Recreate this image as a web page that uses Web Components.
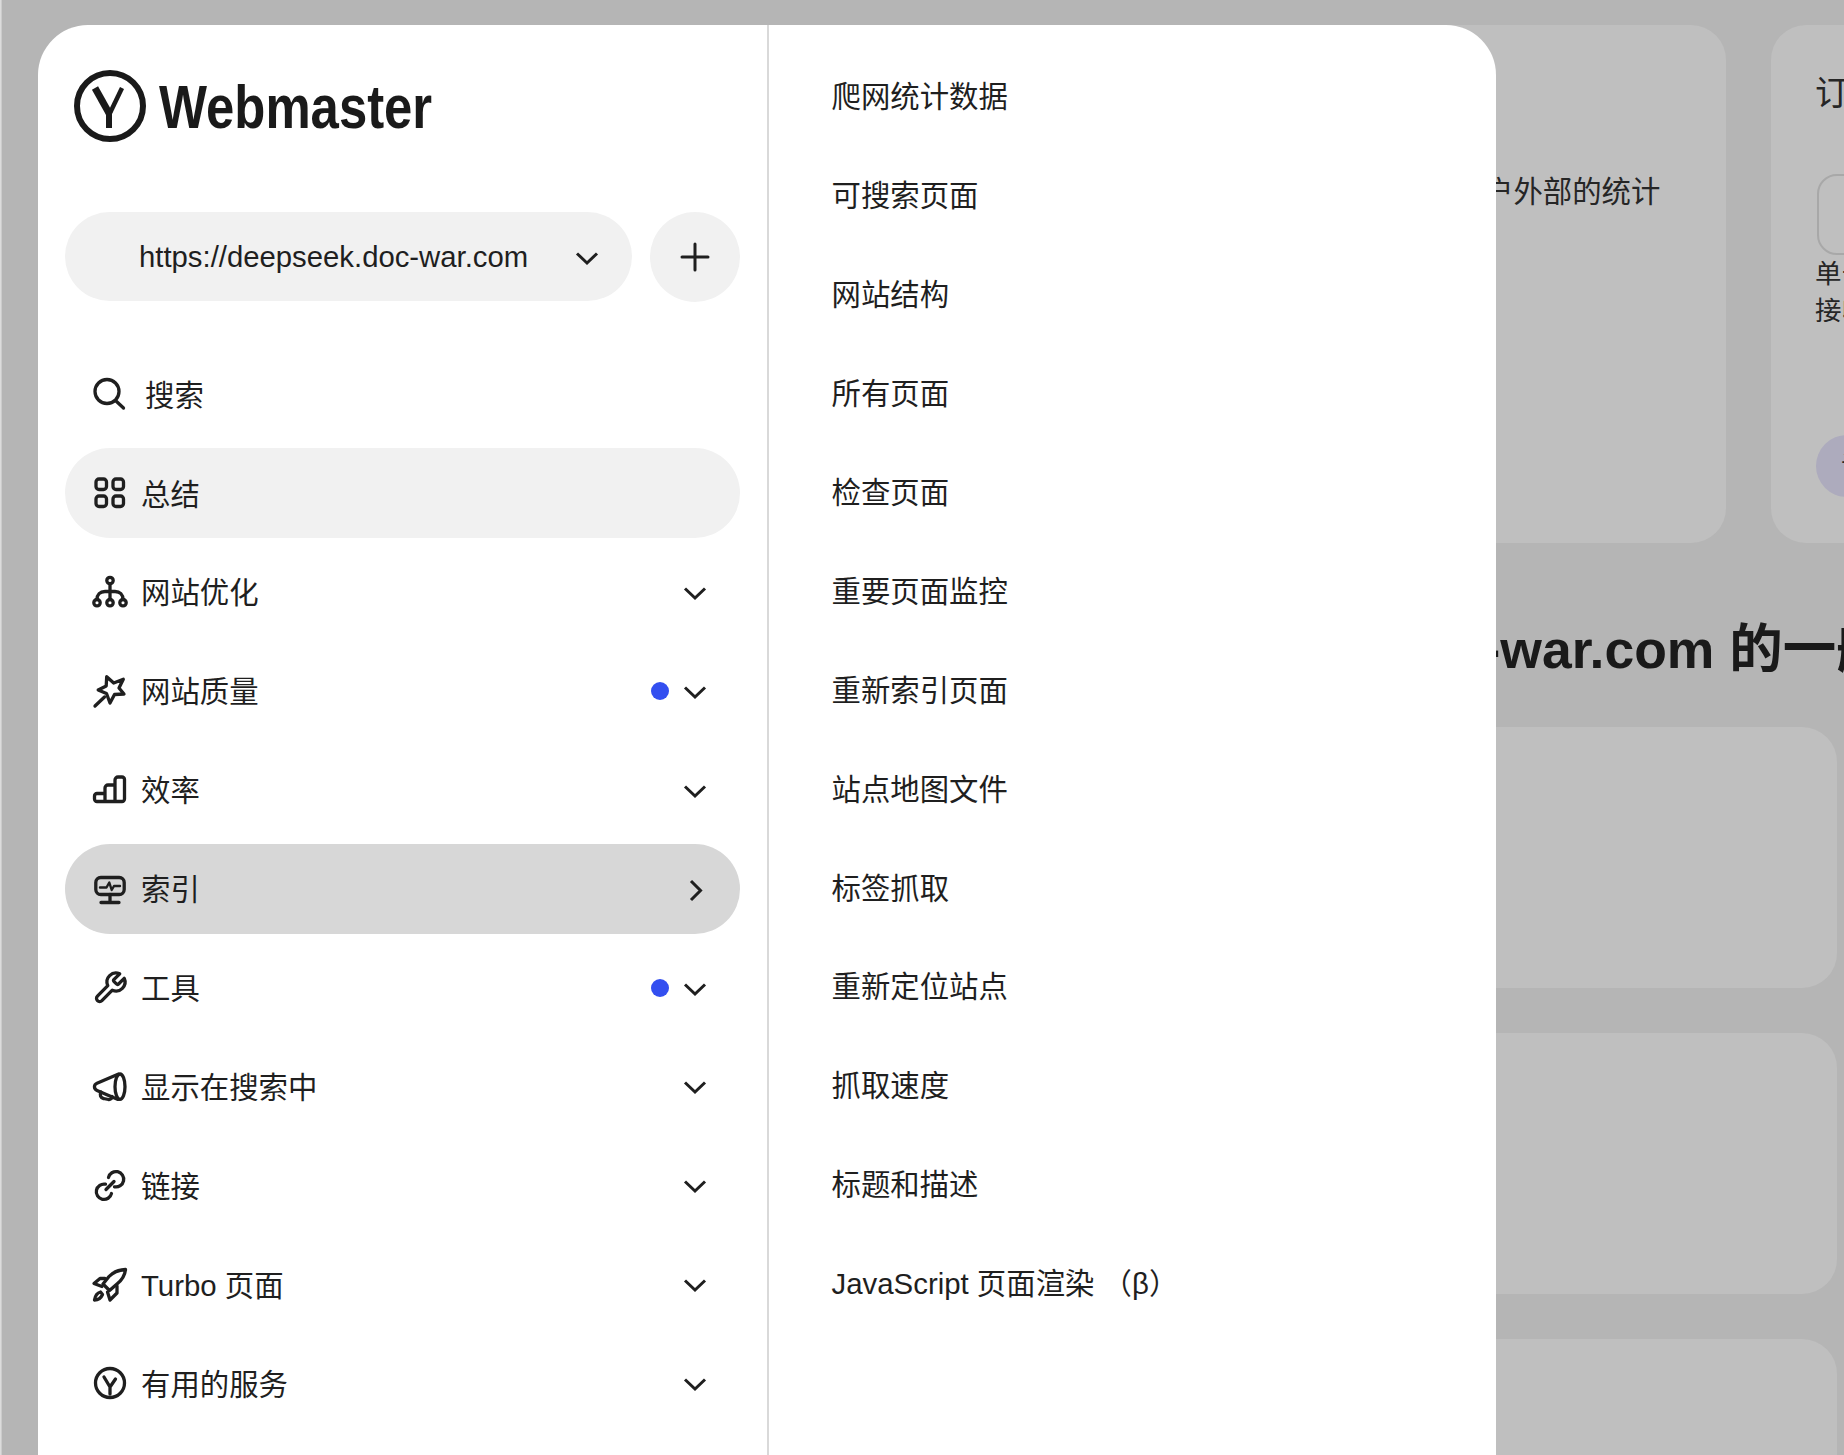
<!DOCTYPE html>
<html lang="zh">
<head>
<meta charset="utf-8">
<title>Webmaster</title>
<style>
  html, body { margin: 0; padding: 0; height: 100%; overflow: hidden; }
  body { font-family: "Liberation Sans", "Noto Sans CJK SC", sans-serif; color: #1f1f1f; }
</style>
</head>
<body>
<wm-page>
  <wm-bg-top slot="top"></wm-bg-top>
  <wm-drawer slot="drawer">
    <wm-logo slot="logo"></wm-logo>
    <wm-site-select slot="site">https://deepseek.doc-war.com</wm-site-select>
    <wm-nav-item slot="nav" icon="search" gap="17">搜索</wm-nav-item>
    <wm-nav-item slot="nav" icon="grid" state="current">总结</wm-nav-item>
    <wm-nav-item slot="nav" icon="tree" arrow="down">网站优化</wm-nav-item>
    <wm-nav-item slot="nav" icon="star" arrow="down" dot>网站质量</wm-nav-item>
    <wm-nav-item slot="nav" icon="bars" arrow="down">效率</wm-nav-item>
    <wm-nav-item slot="nav" icon="monitor" arrow="right" state="open">索引</wm-nav-item>
    <wm-nav-item slot="nav" icon="wrench" arrow="down" dot>工具</wm-nav-item>
    <wm-nav-item slot="nav" icon="megaphone" arrow="down">显示在搜索中</wm-nav-item>
    <wm-nav-item slot="nav" icon="link" arrow="down">链接</wm-nav-item>
    <wm-nav-item slot="nav" icon="rocket" arrow="down">Turbo 页面</wm-nav-item>
    <wm-nav-item slot="nav" icon="ya" arrow="down">有用的服务</wm-nav-item>
    <wm-sub-item slot="sub">爬网统计数据</wm-sub-item>
    <wm-sub-item slot="sub">可搜索页面</wm-sub-item>
    <wm-sub-item slot="sub">网站结构</wm-sub-item>
    <wm-sub-item slot="sub">所有页面</wm-sub-item>
    <wm-sub-item slot="sub">检查页面</wm-sub-item>
    <wm-sub-item slot="sub">重要页面监控</wm-sub-item>
    <wm-sub-item slot="sub">重新索引页面</wm-sub-item>
    <wm-sub-item slot="sub">站点地图文件</wm-sub-item>
    <wm-sub-item slot="sub">标签抓取</wm-sub-item>
    <wm-sub-item slot="sub">重新定位站点</wm-sub-item>
    <wm-sub-item slot="sub">抓取速度</wm-sub-item>
    <wm-sub-item slot="sub">标题和描述</wm-sub-item>
    <wm-sub-item slot="sub">JavaScript 页面渲染 （β）</wm-sub-item>
  </wm-drawer>
</wm-page>

<script>
const ICONS = {
  search: '<circle cx="15" cy="15.5" r="12"/><path d="M23.5 24.5l8 7.5"/>',
  grid: '<rect x="4" y="4" width="10.500" height="10.500" rx="3"/><rect x="21" y="4" width="10.500" height="10.500" rx="3"/><rect x="4" y="21" width="10.500" height="10.500" rx="3"/><rect x="21" y="21" width="10.500" height="10.500" rx="3"/>',
  tree: '<circle cx="18" cy="6.5" r="3.2"/><circle cx="5" cy="28.7" r="3.2"/><circle cx="18" cy="28.7" r="3.2"/><circle cx="31" cy="28.7" r="3.2"/><path d="M18 10v15.5M5 25.5c0-5 3-8 8-8h10c5 0 8 3 8 8"/>',
  star: '<path d="M14.7 3.700l7 6.300 9.600-3.700-4.300 8.700 5 6-9.500.5-4.500 8.500-3.500-9.500-8.300-3.500 8-4z"/><path d="M3 33l9.500-9"/>',
  bars: '<path d="M13 29.5H5A2.5 2.5 0 0 1 2.5 27v-3A2.5 2.5 0 0 1 5 21.5h8M13 29.5V16a3 3 0 0 1 3-3h7M23 29.5V8a3 3 0 0 1 3-3h4a2.5 2.5 0 0 1 2.5 2.5V27a2.5 2.5 0 0 1-2.5 2.5H5"/>',
  monitor: '<rect x="3.8" y="6.5" width="28.4" height="17" rx="5"/><path d="M18 23.5v8M9 31.5h18"/><path d="M8 16.5h6.5l2.8-5 2.4 7.5 2.3-4h6" stroke-width="2.4"/>',
  wrench: '<g transform="scale(1.5)"><path stroke-width="2.2" d="M14.7 6.3a1 1 0 0 0 0 1.4l1.6 1.6a1 1 0 0 0 1.4 0l3.77-3.77a6 6 0 0 1-7.94 7.94l-6.91 6.91a2.12 2.12 0 0 1-3-3l6.91-6.91a6 6 0 0 1 7.94-7.94l-3.76 3.76z"/></g>',
  megaphone: '<ellipse cx="28" cy="18.7" rx="5" ry="12.7"/><path d="M26 6.3L5 15.2c-3.4 1.5-3.4 5.7 0 7.2l21 9"/><path d="M9 24c-1.5 3-.5 6 2.5 6.5l5 1c2 .3 3.500-1 3.500-3"/>',
  link: '<path d="M13.500 17.200A7.700 7.700 0 1 0 19.500 26.500M22.500 19.800A7.700 7.700 0 1 0 16.500 10.500M14 22.500l8-8"/>',
  rocket: '<path d="M33.500 3.500C26 4 21 6 17 10.500L11 18l6.500 6.500L25 18c5-4 8-9 8.500-14.500z"/><path d="M13 12.500H8l-6 5 8 3M25 20v7l-7 7-2.500-8"/><path d="M8.500 26C4.500 27 3 31 2.500 34c3.500 0 6.500-2 8-5.500z"/>',
  ya: '<circle cx="18" cy="18" r="14.500"/><path d="M12 12l6 10v7M23.500 14L18 22"/>'
};

class WmIcon extends HTMLElement {
  constructor() {
    super();
    this.attachShadow({ mode: 'open' });
  }
  connectedCallback() {
    const name = this.getAttribute('name');
    this.shadowRoot.innerHTML = `
      <style>
        :host { display: block; width: 36px; height: 36px; flex: none; }
        svg { display: block; width: 36px; height: 36px; fill: none; stroke: #1f1f1f; stroke-width: 3.3;
              stroke-linecap: round; stroke-linejoin: round; overflow: visible; }
      </style>
      <svg viewBox="0 0 36 36">${ICONS[name]}</svg>`;
  }
}
customElements.define('wm-icon', WmIcon);

class WmNavItem extends HTMLElement {
  constructor() {
    super();
    this.attachShadow({ mode: 'open' });
  }
  connectedCallback() {
    const arrow = this.getAttribute('arrow');
    const state = this.getAttribute('state');
    const gap = this.getAttribute('gap') || 13;
    const bg = state === 'current' ? '#f1f1f1' : state === 'open' ? '#d7d7d7' : 'transparent';
    let arrowSvg = '';
    if (arrow === 'down') arrowSvg = '<svg class="arrow" viewBox="0 0 24 24"><path d="M2 7.500l10 9.500 10-9.500"/></svg>';
    if (arrow === 'right') arrowSvg = '<svg class="arrow" viewBox="0 0 24 24"><path d="M8 3l9.500 9.500L8 22"/></svg>';
    this.shadowRoot.innerHTML = `
      <style>
        :host { display: flex; align-items: center; height: 90px; padding: 0 33px 0 27px;
                border-radius: 45px; background: ${bg}; font-size: 29.4px; }
        .label { flex: 1; margin: 0 0 3px ${gap}px; white-space: nowrap; }
        .dot { width: 18px; height: 18px; border-radius: 50%; background: #334ff0; margin-right: 14px; }
        .arrow { width: 24px; height: 24px; fill: none; stroke: #1f1f1f; stroke-width: 3; flex: none;
                 margin-top: 2px; }
      </style>
      <wm-icon name="${this.getAttribute('icon')}"></wm-icon>
      <span class="label"><slot></slot></span>
      ${this.hasAttribute('dot') ? '<span class="dot"></span>' : ''}
      ${arrowSvg}`;
  }
}
customElements.define('wm-nav-item', WmNavItem);

class WmSubItem extends HTMLElement {
  constructor() {
    super();
    this.attachShadow({ mode: 'open' }).innerHTML = `
      <style>
        :host { display: flex; align-items: center; height: 89.9px; font-size: 29.4px; white-space: pre; }
      </style>
      <slot></slot>`;
  }
}
customElements.define('wm-sub-item', WmSubItem);

class WmLogo extends HTMLElement {
  constructor() {
    super();
    this.attachShadow({ mode: 'open' }).innerHTML = `
      <style>
        :host { display: flex; align-items: center; height: 72px; margin-left: 9px; }
        svg { width: 72px; height: 72px; flex: none; }
        .name { display: block; width: 273px; margin: 2px 0 0 13px; font-size: 62px; font-weight: 700; line-height: 72px;
                color: #1a1a1a; transform: scaleX(.82); transform-origin: left center; white-space: nowrap; }
      </style>
      <svg viewBox="0 0 72 72" fill="none" stroke="#1a1a1a">
        <circle cx="36" cy="36" r="33" stroke-width="6"/>
        <path d="M21 18l14.500 26" stroke-width="7"/>
        <path d="M48 18L35.500 44" stroke-width="4.500"/>
        <path d="M35 42v16" stroke-width="6"/>
      </svg>
      <span class="name">Webmaster</span>`;
  }
}
customElements.define('wm-logo', WmLogo);

class WmSiteSelect extends HTMLElement {
  constructor() {
    super();
    this.attachShadow({ mode: 'open' }).innerHTML = `
      <style>
        :host { display: flex; gap: 18px; }
        .select { display: flex; align-items: center; justify-content: space-between; box-sizing: border-box;
                  width: 567px; height: 89px; padding: 0 33px 0 74px; border-radius: 45px; background: #f1f1f1; }
        .url { font-size: 29.3px; white-space: nowrap; }
        .plus { display: flex; align-items: center; justify-content: center; width: 90px; height: 90px;
                border-radius: 50%; background: #f1f1f1; }
        svg { fill: none; stroke: #1f1f1f; stroke-width: 3; }
      </style>
      <div class="select">
        <span class="url"><slot></slot></span>
        <svg width="24" height="24" viewBox="0 0 24 24" style="margin-top:3px"><path d="M2 7.500l10 9.500 10-9.500"/></svg>
      </div>
      <div class="plus">
        <svg width="30" height="30" viewBox="0 0 30 30" stroke-linecap="round"><path d="M15 2v26M2 15h26"/></svg>
      </div>`;
  }
}
customElements.define('wm-site-select', WmSiteSelect);

class WmDrawer extends HTMLElement {
  constructor() {
    super();
    this.attachShadow({ mode: 'open' }).innerHTML = `
      <style>
        :host { position: absolute; left: 38px; top: 25px; bottom: 0; width: 1458px; display: flex;
                background: #fff; border-radius: 50px 50px 0 0; overflow: hidden; }
        .main { box-sizing: border-box; width: 731px; padding: 45px 27px 0; border-right: 2px solid #d9d9d9;
                flex: none; }
        .site { margin-top: 70px; }
        .nav { display: flex; flex-direction: column; gap: 8.9px; margin-top: 47.2px; }
        .sub { display: flex; flex-direction: column; gap: 9px; padding: 24.5px 0 0 62.5px; }
      </style>
      <div class="main">
        <slot name="logo"></slot>
        <div class="site"><slot name="site"></slot></div>
        <div class="nav"><slot name="nav"></slot></div>
      </div>
      <div class="sub"><slot name="sub"></slot></div>`;
  }
}
customElements.define('wm-drawer', WmDrawer);

class WmBgTop extends HTMLElement {
  constructor() {
    super();
    this.attachShadow({ mode: 'open' }).innerHTML = `
      <style>
        :host { display: flex; gap: 45px; height: 518px; font-size: 29.4px; white-space: nowrap; color: #262626; }
        .card { box-sizing: border-box; height: 518px; border-radius: 35px; background: #bfbfbf; flex: none; }
        .stats { width: 326px; padding: 147px 0 0 84px; line-height: 40px; }
        .sub { width: 500px; padding: 48px 0 0 44px; }
        .title { line-height: 40px; font-size: 34px; }
        .box { width: 400px; height: 81px; box-sizing: border-box; margin: 61px 0 0 2px; border: 2px solid #a8a8a8;
               border-radius: 20px; }
        .hint { margin-top: 1px; line-height: 37px; font-size: 26.5px; }
        .btn { display: block; width: 200px; height: 62px; margin: 105px 0 0 1px; padding-left: 25px; box-sizing: border-box;
               border-radius: 31px; background: #adabbd; line-height: 62px; font-size: 26px; }
      </style>
      <div class="card stats">户外部的统计</div>
      <div class="card sub">
        <div class="title">订阅</div>
        <div class="box"></div>
        <div class="hint">单击<br>接收</div>
        <div class="btn">订阅</div>
      </div>`;
  }
}
customElements.define('wm-bg-top', WmBgTop);

class WmPage extends HTMLElement {
  constructor() {
    super();
    this.attachShadow({ mode: 'open' }).innerHTML = `
      <style>
        :host { display: block; position: relative; width: 1844px; height: 1455px; overflow: hidden;
                background: #b5b5b5; }
        .edge { position: absolute; left: 0; top: 0; bottom: 0; width: 2px;
                background: linear-gradient(90deg, #e4e4e4, #c4c4c4); }
        .content { padding: 25px 0 0 1400px; width: 2200px; }
        h1 { margin: 77px 0 0 82.5px; font-size: 53.5px; line-height: 60px; font-weight: 700; color: #1a1a1a;
             white-space: nowrap; }
        .rows { display: flex; flex-direction: column; gap: 45px; margin-top: 47px; }
        .row { width: 437px; height: 261px; border-radius: 35px; background: #bfbfbf; }
      </style>
      <div class="edge"></div>
      <div class="content">
        <slot name="top"></slot>
        <h1>-war.com 的一般</h1>
        <div class="rows">
          <div class="row"></div>
          <div class="row"></div>
          <div class="row"></div>
        </div>
      </div>
      <slot name="drawer"></slot>`;
  }
}
customElements.define('wm-page', WmPage);
</script>
</body>
</html>
